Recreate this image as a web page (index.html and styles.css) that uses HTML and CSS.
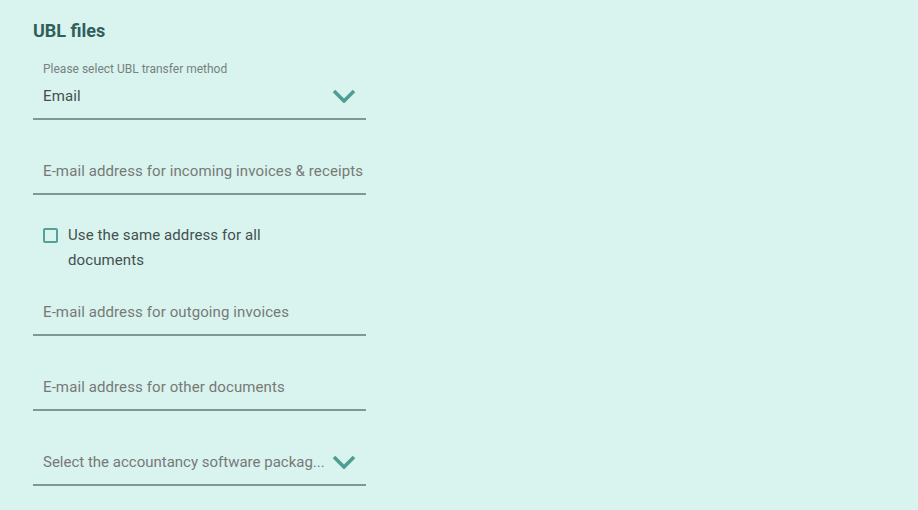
FILE: index.html
```html
<!DOCTYPE html>
<html lang="en">
<head>
    <meta charset="UTF-8" />
    <meta name="viewport" content="width=device-width, initial-scale=1.0" />
    <title>UBL files</title>
    <link rel="stylesheet" href="styles.css">
</head>
<body>
    <div class="panel">
        <h2 class="title">UBL files</h2>

        <div class="field">
            <span class="label">Please select UBL transfer method</span>
            <div class="row">
                <span class="value">Email</span>
                <svg class="chevron" viewBox="0 0 24 14"><path d="M2 2 L12 12 L22 2" /></svg>
            </div>
        </div>

        <div class="field">
            <div class="row">
                <span class="placeholder">E-mail address for incoming invoices &amp; receipts</span>
            </div>
        </div>

        <label class="check">
            <span class="box"></span>
            <span class="check-text">Use the same address for all documents</span>
        </label>

        <div class="field short">
            <div class="row">
                <span class="placeholder">E-mail address for outgoing invoices</span>
            </div>
        </div>

        <div class="field">
            <div class="row">
                <span class="placeholder">E-mail address for other documents</span>
            </div>
        </div>

        <div class="field">
            <div class="row">
                <span class="placeholder tight">Select the accountancy software packag...</span>
                <svg class="chevron" viewBox="0 0 24 14"><path d="M2 2 L12 12 L22 2" /></svg>
            </div>
        </div>
    </div>
</body>
</html>
```

FILE: styles.css
```css
body{
    margin: 0;
    background-color: #d9f3ef;
    font-family: Roboto, "Liberation Sans", sans-serif;
    color: #4b5552;
}
.panel{
    width: 333px;
    margin-left: 33px;
    padding-top: 17px;
}
.title{
    margin: 0;
    font-size: 18px;
    line-height: 28px;
    font-weight: 700;
    color: #2f5f5b;
}
.field{
    padding: 0 10px 12px;
    box-sizing: border-box;
    height: 75px;
    border-bottom: 2px solid #7f9894;
    display: flex;
    flex-direction: column;
    justify-content: flex-end;
}
.field.short{
    height: 63px;
}
.label{
    font-size: 12px;
    line-height: 14px;
    color: #76827f;
    margin-bottom: 10px;
}
.row{
    display: flex;
    align-items: center;
    height: 20px;
}
.value{
    flex: 1;
    font-size: 15px;
    letter-spacing: 0.1px;
    color: #44504d;
}
.placeholder{
    flex: 1;
    font-size: 15px;
    letter-spacing: 0.1px;
    color: #767a76;
    white-space: nowrap;
}
.placeholder.tight{
    letter-spacing: 0;
}
.chevron{
    width: 24px;
    height: 14px;
    margin-left: 4px;
    flex-shrink: 0;
}
.chevron path{
    fill: none;
    stroke: #4f9d93;
    stroke-width: 3.6;
}
.check{
    display: flex;
    align-items: flex-start;
    padding: 28px 0 0 10px;
    height: 50px;
}
.box{
    width: 15px;
    height: 15px;
    box-sizing: border-box;
    border: 2px solid #55a197;
    border-radius: 2px;
    margin-top: 5px;
    flex-shrink: 0;
}
.check-text{
    margin-left: 10px;
    width: 215px;
    font-size: 15px;
    letter-spacing: 0.1px;
    line-height: 25px;
    color: #44504d;
}
```
